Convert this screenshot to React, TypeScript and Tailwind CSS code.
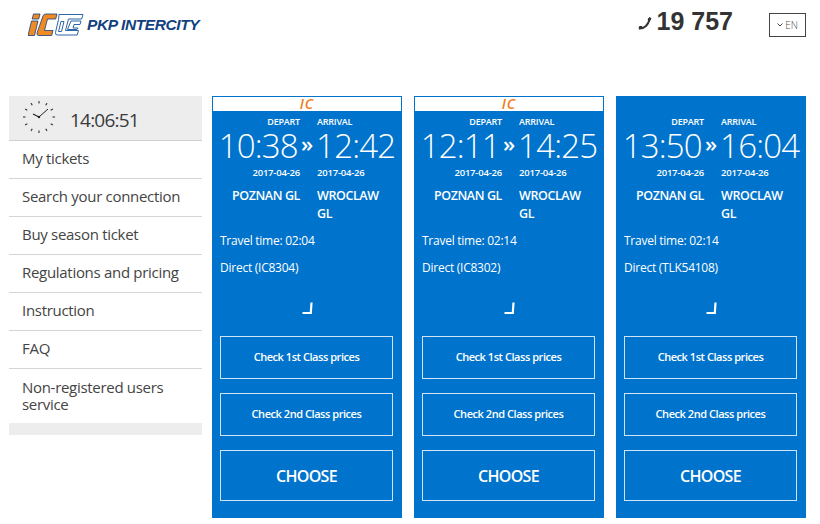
import { ReactNode } from "react"

type Train = {
    depart: string,
    arrive: string,
    time: string,
    direct: string,
    ic: boolean
}

const trains: Train[] = [
    { depart: "10:38", arrive: "12:42", time: "02:04", direct: "IC8304", ic: true },
    { depart: "12:11", arrive: "14:25", time: "02:14", direct: "IC8302", ic: true },
    { depart: "13:50", arrive: "16:04", time: "02:14", direct: "TLK54108", ic: false },
]

const menu = ["My tickets", "Search your connection", "Buy season ticket", "Regulations and pricing", "Instruction", "FAQ"]

const Logo = () => (
    <svg width="56" height="24" viewBox="0 0 56 24" className="shrink-0">
        {/* outlined letters */}
        <path d="M31 1.500h24l-1.300 4.500H40.500l-3 11.500h13l-1.300 4.500H29.500q-2.500 0-2-2.500l3-13z" fill="#fff" stroke="#2f66a6" strokeWidth="1" />
        <path d="M33 8.500h3l-2.500 10h-3zM43 8h10l-1 3.500h-6l-1 3.500h5l-1 1.500H39.500z" fill="#fff" stroke="#2f66a6" strokeWidth="1" />
        {/* i */}
        <path d="M3.500 8h6.500L6.500 22.500H0z" fill="#f08a24" stroke="#123f7f" strokeWidth="0.800" />
        <path d="M5.500 1h6.500l-1.300 5H4.200z" fill="#f08a24" stroke="#123f7f" strokeWidth="0.800" />
        {/* C */}
        <path d="M15 3q.5-2 3-2h11l-1.300 5H19.500l-3 11.500h8.500l-1.300 5H11q-2.500 0-2-2.500z" fill="#f08a24" stroke="#123f7f" strokeWidth="0.800" />
    </svg>
)

const ClockFace = () => {
    const ticks = Array.from({ length: 12 }, (_, i) => (i * Math.PI) / 6)
    return (
        <svg width="34" height="34" viewBox="0 0 34 34" className="shrink-0">
            {ticks.map((a, i) => (
                <line
                    key={i}
                    x1={16 + Math.sin(a) * 13.5}
                    y1={16 - Math.cos(a) * 13.5}
                    x2={16 + Math.sin(a) * 16}
                    y2={16 - Math.cos(a) * 16}
                    stroke="#333"
                    strokeWidth="1.100"
                />
            ))}
            <line x1="16" y1="16" x2="10" y2="13" stroke="#222" strokeWidth="1.200" />
            <line x1="16" y1="16" x2="25" y2="8" stroke="#222" strokeWidth="1" />
            <circle cx="16" cy="16" r="1.200" fill="#222" />
        </svg>
    )
}

const OutlineButton = ({ children, big }: { children: ReactNode, big?: boolean }) => (
    <button className={`w-full border border-[#cfe3f5] text-white font-semibold flex items-center justify-center ${big ? "h-[51px] pt-[1px] text-[16px] tracking-[-0.7px]" : "h-[43px] text-[11px] tracking-[-0.45px]"}`}>
        {children}
    </button>
)

const TrainCard = ({ train }: { train: Train }) => (
    <div className="w-[190px] h-[422px] bg-[#0073cc] text-white flex flex-col shrink-0">
        {train.ic ? (
            <div className="h-[16px] bg-white border border-[#0073cc] flex items-center justify-center text-[#f07c1a] italic font-semibold text-[14px] tracking-[1px] leading-[14px]">
                IC
            </div>
        ) : (
            <div className="h-[16px]" />
        )}
        <div className="grid grid-cols-[97px_93px] pt-[3px]">
            <div className="text-[9px] font-semibold text-right pr-[9px] leading-[13px] tracking-[-0.2px]">DEPART</div>
            <div className="text-[9px] font-semibold pl-[8px] leading-[13px] tracking-[-0.2px]">ARRIVAL</div>
        </div>
        <div className="flex items-center justify-center h-[30px] mt-[3px] text-[33px] font-light leading-[30px]">
            <span className="tracking-[-0.8px]">{train.depart}</span>
            <span className="text-[22px] leading-[30px] font-semibold mx-[3px] pb-[6px]">»</span>
            <span className="tracking-[-0.8px]">{train.arrive}</span>
        </div>
        <div className="grid grid-cols-[97px_93px] pt-[5px]">
            <div className="text-[9.500px] font-semibold text-right pr-[9px] leading-[14px] tracking-[-0.2px]">2017-04-26</div>
            <div className="text-[9.500px] font-semibold pl-[8px] leading-[14px] tracking-[-0.2px]">2017-04-26</div>
        </div>
        <div className="grid grid-cols-[97px_93px] pt-[7px] text-[12.500px] font-semibold leading-[18px]">
            <div className="text-right pr-[9px] tracking-[-0.4px]">POZNAN GL</div>
            <div className="pl-[8px] tracking-[-0.4px]">WROCLAW<br />GL</div>
        </div>
        <div className="px-[8px] pt-[9px] text-[12px] leading-[18px] tracking-[-0.25px]">Travel time: {train.time}</div>
        <div className="px-[8px] pt-[9px] text-[12px] leading-[18px] tracking-[-0.25px]">Direct ({train.direct})</div>
        <div className="flex justify-center pt-[25px]">
            <svg width="11" height="13" viewBox="0 0 11 13">
                <path d="M9.500 0.500 8.800 11H0.500" fill="none" stroke="#fff" strokeWidth="2.200" />
            </svg>
        </div>
        <div className="pl-[8px] pr-[9px] pt-[21px] flex flex-col gap-[14px]">
            <OutlineButton>Check 1st Class prices</OutlineButton>
            <OutlineButton>Check 2nd Class prices</OutlineButton>
            <OutlineButton big>CHOOSE</OutlineButton>
        </div>
    </div>
)

const App = () => {
    return (
        <div className="w-[820px] h-[524px] bg-white overflow-hidden font-['Open_Sans',sans-serif]">
            {/* header */}
            <header className="h-[96px] flex justify-between">
                <div className="flex items-start pl-[28px] pt-[13px] gap-[3px]">
                    <Logo />
                    <span className="text-[#123f7f] italic font-bold text-[15.500px] leading-[18px] mt-[3px] tracking-[-0.4px] font-['Liberation_Sans',sans-serif]">PKP INTERCITY</span>
                </div>
                <div className="flex items-start pr-[14px]">
                    <div className="flex items-center text-[#333] font-['Liberation_Sans',sans-serif] font-bold text-[25px] leading-none pt-[9px]">
                        <svg width="14" height="14" viewBox="0 0 14 14" className="mr-[5px] mt-[2px]">
                            <path d="M1 12.500C6 13 11 9 11.500 2" fill="none" stroke="#333" strokeWidth="2" />
                            <path d="M1 12.500 1.500 10.500 4 10.500 3.800 12zM11.500 1.500 13 2.500 11.500 5 10 4z" fill="#333" stroke="#333" />
                        </svg>
                        19 757
                    </div>
                    <div className="ml-[36px] mt-[13px] w-[37px] h-[24px] border border-[#444] flex items-center justify-center gap-[2px] text-[10px] font-light text-[#555]">
                        <svg width="6" height="4" viewBox="0 0 6 4">
                            <path d="M0.500 0.500 3 3 5.500 0.500" fill="none" stroke="#444" />
                        </svg>
                        EN
                    </div>
                </div>
            </header>

            <div className="flex pl-[9px] gap-[10px]">
                {/* sidebar */}
                <aside className="w-[193px] shrink-0">
                    <div className="h-[45px] bg-[#ededed] border-b border-[#d0d0d0] flex items-center pl-[14px] gap-[13px] text-[#3a3a3a] text-[19px] tracking-[-0.8px]">
                        <ClockFace />
                        <span className="mt-[5px]">14:06:51</span>
                    </div>
                    {menu.map((item, index) => (
                        <div key={`menu${index}`} className="h-[38px] border-b border-[#d5d5d5] flex items-center pl-[13px] pb-[2px] text-[15px] text-[#444] tracking-[-0.3px]">
                            {item}
                        </div>
                    ))}
                    <div className="pl-[13px] pt-[10px] pb-[10px] text-[15px] leading-[17px] text-[#444] tracking-[-0.3px]">
                        Non-registered users<br />service
                    </div>
                    <div className="h-[12px] bg-[#ededed]" />
                </aside>

                {/* cards */}
                <main className="flex gap-[12px]">
                    {trains.map((train, index) => (
                        <TrainCard train={train} key={`train${index}`} />
                    ))}
                </main>
            </div>
        </div>
    )
}

export default App
